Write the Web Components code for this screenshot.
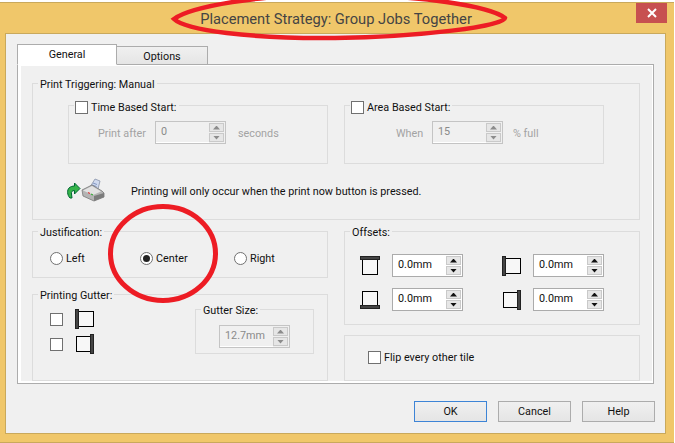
<!DOCTYPE html>
<html>
<head>
<meta charset="utf-8">
<title>Placement Strategy</title>
<style>
    html, body { margin: 0; height: 100%; background: #fff; overflow: hidden; }
    body { font: 10.8px Roboto, sans-serif; color: #111; }
</style>
</head>
<body>
<x-dialog title="Placement Strategy: Group Jobs Together">
    <x-tabs>
        <div style="display:flex;flex-direction:column;gap:11px;width:608px">
            <x-group style="height:137px">
                <span slot="legend">Print Triggering: Manual</span>
                <div style="display:flex;gap:16px;padding:13px 0 0 35px">
                    <x-group style="width:260px;height:59px">
                        <x-check slot="legend" style="margin:1px 0 0 -1px">Time Based Start:</x-check>
                        <x-field pad="29" width="57" before="Print after" after="seconds" value="0" gap="12"></x-field>
                    </x-group>
                    <x-group style="width:260px;height:59px">
                        <x-check slot="legend" style="margin:1px 0 0 -1px">Area Based Start:</x-check>
                        <x-field pad="51" width="36" before="When" after="% full" value="15" gap="10"></x-field>
                    </x-group>
                </div>
                <x-info>Printing will only occur when the print now button is pressed.</x-info>
            </x-group>
            <div style="display:grid;grid-template-columns:296px 296px;gap:16px">
                <div style="display:flex;flex-direction:column;gap:16px">
                    <x-group style="height:47px">
                        <span slot="legend">Justification:</span>
                        <div style="display:grid;grid-template-columns:90px 94px auto;padding:12px 0 0 17px">
                            <x-radio>Left</x-radio>
                            <x-radio checked>Center</x-radio>
                            <x-radio>Right</x-radio>
                        </div>
                    </x-group>
                    <x-group style="height:87px">
                        <span slot="legend">Printing Gutter:</span>
                        <div style="display:flex;padding:6px 0 0 17px">
                            <div style="display:grid;grid-template-columns:25px 20px;row-gap:5px;align-items:center;width:145px;height:45px">
                                <x-check></x-check><x-edge side="left"></x-edge>
                                <x-check></x-check><x-edge side="right"></x-edge>
                            </div>
                            <x-group style="width:119px;height:45px">
                                <span slot="legend">Gutter Size:</span>
                                <div style="padding:7px 0 0 23px"><x-spin value="12.7mm" disabled></x-spin></div>
                            </x-group>
                        </div>
                    </x-group>
                </div>
                <div style="display:flex;flex-direction:column;gap:10px">
                    <x-group style="height:94px">
                        <span slot="legend">Offsets:</span>
                        <div style="display:grid;grid-template-columns:32px 110px 31px 71px;grid-auto-rows:23px;row-gap:11px;align-items:center;padding:14px 0 0 15px">
                            <x-edge side="top"></x-edge><x-spin value="0.0mm"></x-spin>
                            <x-edge side="left"></x-edge><x-spin value="0.0mm"></x-spin>
                            <x-edge side="bottom"></x-edge><x-spin value="0.0mm"></x-spin>
                            <x-edge side="right"></x-edge><x-spin value="0.0mm"></x-spin>
                        </div>
                    </x-group>
                    <x-group style="height:46px">
                        <div style="padding:13px 0 0 23px"><x-check>Flip every other tile</x-check></div>
                    </x-group>
                </div>
            </div>
        </div>
    </x-tabs>
    <x-button slot="buttons" default>OK</x-button>
    <x-button slot="buttons">Cancel</x-button>
    <x-button slot="buttons">Help</x-button>
</x-dialog>
<x-marks></x-marks>

<script>
class XDialog extends HTMLElement {
    constructor () {
        super();
        this.attachShadow({ mode: 'open' }).innerHTML = `
<style>
    :host { display: flex; flex-direction: column; box-sizing: border-box; width: 674px; height: 441px; margin-top: 2px;
        background: #f0c76a; border-top: 1px solid #c9a95c; border-bottom: 1px solid #c9a95c; }
    .bar { flex: none; height: 30px; display: flex; justify-content: center; position: relative; }
    .title { font-size: 14.7px; color: #444; line-height: 33px; margin-left: -2px; }
    .close { position: absolute; right: 7px; top: 0; width: 31px; height: 20px; background: #c75050; display: flex; align-items: center; justify-content: center; }
    .client { flex: none; box-sizing: border-box; width: 661px; height: 401px; margin-left: 5px; background: #f0f0f0;
        border: 1px solid #c9a95c; padding: 10px 0 0 11px; }
    .buttons { display: flex; gap: 11px; justify-content: flex-end; margin: 17px 10px 0 0; }
</style>
<div class="bar">
    <div class="title"></div>
    <div class="close"><svg width="10" height="10" viewBox="0 0 10 10"><path d="M1 1L9 9M9 1L1 9" stroke="#fff" stroke-width="2"/></svg></div>
</div>
<div class="client">
    <slot></slot>
    <div class="buttons"><slot name="buttons"></slot></div>
</div>`;
        this.shadowRoot.querySelector('.title').textContent = this.getAttribute('title');
        this.removeAttribute('title');
    }
}

class XTabs extends HTMLElement {
    constructor () {
        super();
        this.attachShadow({ mode: 'open' }).innerHTML = `
<style>
    :host { display: block; width: 637px; }
    .strip { display: flex; align-items: flex-end; height: 21px; position: relative; z-index: 1; margin-bottom: -1px; }
    .tab { box-sizing: border-box; text-align: center; border: 1px solid #acacac; border-bottom: 0; }
    .on { width: 100px; height: 21px; background: #fff; line-height: 20px; border-bottom: 1px solid #fff; }
    .off { width: 92px; height: 18px; margin-bottom: 1px; margin-left: -1px; line-height: 20px; background: linear-gradient(#f0f0f0, #e5e5e5); }
    .panel { box-sizing: border-box; height: 320px; background: #f0f0f0; border: 1px solid #acacac;
        box-shadow: inset 3px 1px 0 #fff, inset -1px -2px 0 #fff; padding: 18px 0 0 14px; }
</style>
<div class="strip"><div class="tab on">General</div><div class="tab off">Options</div></div>
<div class="panel"><slot></slot></div>`;
    }
}

class XGroup extends HTMLElement {
    constructor () {
        super();
        this.attachShadow({ mode: 'open' }).innerHTML = `
<style>
    :host { display: block; box-sizing: border-box; border: 1px solid #dcdcdc; }
    .legend { display: table; height: 16px; line-height: 17px; margin: -8px 0 -1px 5px; padding: 0 2px; background: #f0f0f0; }
</style>
<div class="legend"><slot name="legend"></slot></div>
<slot></slot>`;
        if (!this.querySelector('[slot=legend]')) this.shadowRoot.querySelector('.legend').style.display = 'none';
    }
}

class XCheck extends HTMLElement {
    constructor () {
        super();
        this.attachShadow({ mode: 'open' }).innerHTML = `
<style>
    :host { display: flex; align-items: center; gap: 3px; height: 16px; }
    .box { flex: none; box-sizing: border-box; width: 13px; height: 13px; background: #fff; border: 1px solid #707070; }
</style>
<span class="box"></span><slot></slot>`;
    }
}

class XRadio extends HTMLElement {
    constructor () {
        super();
        this.attachShadow({ mode: 'open' }).innerHTML = `
<style>
    :host { display: flex; align-items: center; gap: 3px; height: 13px; }
    svg { flex: none; }
</style>
<svg width="13" height="13" viewBox="0 0 13 13">
    <circle cx="6.5" cy="6.5" r="6" fill="#fff" stroke="#707070"/>
    ${this.hasAttribute('checked') ? '<circle cx="6.5" cy="6.5" r="3.5" fill="#222"/>' : ''}
</svg><slot></slot>`;
    }
}

class XSpin extends HTMLElement {
    constructor () {
        super();
        const off = this.hasAttribute('disabled');
        this.attachShadow({ mode: 'open' }).innerHTML = `
<style>
    :host { display: flex; box-sizing: border-box; width: 71px; height: 23px; border: 1px solid ${off ? '#c4c4c4' : '#ababab'};
        background: ${off ? '#f0f0f0' : '#fff'}; color: ${off ? '#8a8a8a' : '#111'}; }
    .value { flex: 1; padding-left: 5px; line-height: 19px; }
    .btns { display: flex; flex-direction: column; gap: 1px; width: 15px; margin: 1px 1px 1px 0; }
    .btns span { flex: 1; display: flex; align-items: center; justify-content: center; box-sizing: border-box;
        background: #e6e6e6; border: 1px solid #c9c9c9; }
    i { display: block; width: 7px; height: 4px; background: ${off ? '#8c8c8c' : '#111'}; }
    .up { clip-path: polygon(50% 0, 100% 100%, 0 100%); }
    .dn { clip-path: polygon(0 0, 100% 0, 50% 100%); }
    :host([disabled]) .value { box-shadow: inset 0 -1px 0 #fff; }
</style>
<div class="value"></div>
<div class="btns"><span><i class="up"></i></span><span><i class="dn"></i></span></div>`;
        this.shadowRoot.querySelector('.value').textContent = this.getAttribute('value');
    }
}

class XField extends HTMLElement {
    constructor () {
        super();
        this.attachShadow({ mode: 'open' }).innerHTML = `
<style>
    :host { display: flex; align-items: center; height: 23px; color: #a3a3a3; margin-top: 7px; }
    span { padding-top: 2px; }
</style>
<span id="b"></span><x-spin disabled value="${this.getAttribute('value')}"></x-spin><span id="a"></span>`;
        const root = this.shadowRoot;
        root.getElementById('b').textContent = this.getAttribute('before');
        root.getElementById('b').style.width = this.getAttribute('width') + 'px';
        root.getElementById('a').textContent = this.getAttribute('after');
        root.getElementById('a').style.marginLeft = this.getAttribute('gap') + 'px';
        this.style.paddingLeft = this.getAttribute('pad') + 'px';
    }
}

class XEdge extends HTMLElement {
    constructor () {
        super();
        const shapes = {
            top: '<rect x="2.5" y="3.5" width="15" height="15" fill="#f7f7f7" stroke="#000"/><rect x=".5" y=".5" width="19" height="3" fill="#444" stroke="#222"/>',
            bottom: '<rect x="2.5" y="1.5" width="15" height="15" fill="#f7f7f7" stroke="#000"/><rect x=".5" y="15.5" width="19" height="3" fill="#444" stroke="#222"/>',
            left: '<rect x="3.5" y="2.5" width="15" height="15" fill="#f7f7f7" stroke="#000"/><rect x=".5" y=".5" width="3" height="19" fill="#444" stroke="#222"/>',
            right: '<rect x="1.5" y="2.5" width="15" height="15" fill="#f7f7f7" stroke="#000"/><rect x="15.5" y=".5" width="3" height="19" fill="#444" stroke="#222"/>'
        };
        this.attachShadow({ mode: 'open' }).innerHTML = `
<style>:host { display: block; width: 20px; height: 20px; } svg { display: block; }</style>
<svg width="20" height="20" viewBox="0 0 20 20">${shapes[this.getAttribute('side')]}</svg>`;
    }
}

class XInfo extends HTMLElement {
    constructor () {
        super();
        this.attachShadow({ mode: 'open' }).innerHTML = `
<style>
    :host { display: flex; align-items: center; height: 24px; padding: 14px 0 0 34px; }
    svg { flex: none; margin-right: 26px; }
    span { padding-top: 2px; }
</style>
<svg width="38" height="24" viewBox="0 0 38 24">
    <path d="M3 20C0 17 0 12 2 10C3.500 8.500 6 8 7.500 8V5L13 10.500L7.500 16V12.500C5 12.500 4 14 4.500 16L5 20Z" fill="#35b44a" stroke="#063" stroke-width="1" stroke-linejoin="round"/>
    <path d="M23 9L28 1L33 3L31 11Z" fill="#cfd9ee" stroke="#8792a8" stroke-width=".8"/>
    <path d="M26 5L30 6.500M25 7L29.500 8.500" stroke="#6f86b8" stroke-width=".8"/>
    <path d="M15 12L25 7L35 13L37 15V19L27 23L16 18Z" fill="#b4b4b4" stroke="#777" stroke-width=".8"/>
    <path d="M16 12.500L25 8L34 13.500L26 17Z" fill="#e2e2e2"/>
    <path d="M27 18V23L37 19V15Z" fill="#7c7c7c"/>
    <path d="M21 14.500L23 15.500" stroke="#d33" stroke-width="1.200"/>
    <path d="M24 16L26 17" stroke="#3a3" stroke-width="1.200"/>
</svg>
<span><slot></slot></span>`;
    }
}

class XButton extends HTMLElement {
    constructor () {
        super();
        this.attachShadow({ mode: 'open' }).innerHTML = `
<style>
    :host { display: block; box-sizing: border-box; width: 73px; height: 21px; line-height: 19px; text-align: center;
        border: 1px solid #acacac; background: linear-gradient(#f0f0f0, #e5e5e5); }
    :host([default]) { border-color: #3d84d6; }
</style><slot></slot>`;
    }
}

// the red pen marks drawn over the screenshot
class XMarks extends HTMLElement {
    constructor () {
        super();
        this.attachShadow({ mode: 'open' }).innerHTML = `
<style>
    :host { position: absolute; left: 0; top: 0; width: 675px; height: 443px; pointer-events: none; }
</style>
<svg width="675" height="443" viewBox="0 0 675 443" fill="none" stroke="#ed1c24">
    <path d="M174 19C190 7 260 -6 335 -5C420 -5 490 6 505 18C505 26 420 37 335 38C250 39 185 30 174 19Z" stroke-width="4.500"/>
    <ellipse cx="163" cy="253.500" rx="52.500" ry="47" stroke-width="5"/>
</svg>`;
    }
}

customElements.define('x-dialog', XDialog);
customElements.define('x-tabs', XTabs);
customElements.define('x-group', XGroup);
customElements.define('x-check', XCheck);
customElements.define('x-radio', XRadio);
customElements.define('x-spin', XSpin);
customElements.define('x-field', XField);
customElements.define('x-edge', XEdge);
customElements.define('x-info', XInfo);
customElements.define('x-button', XButton);
customElements.define('x-marks', XMarks);
</script>
</body>
</html>
